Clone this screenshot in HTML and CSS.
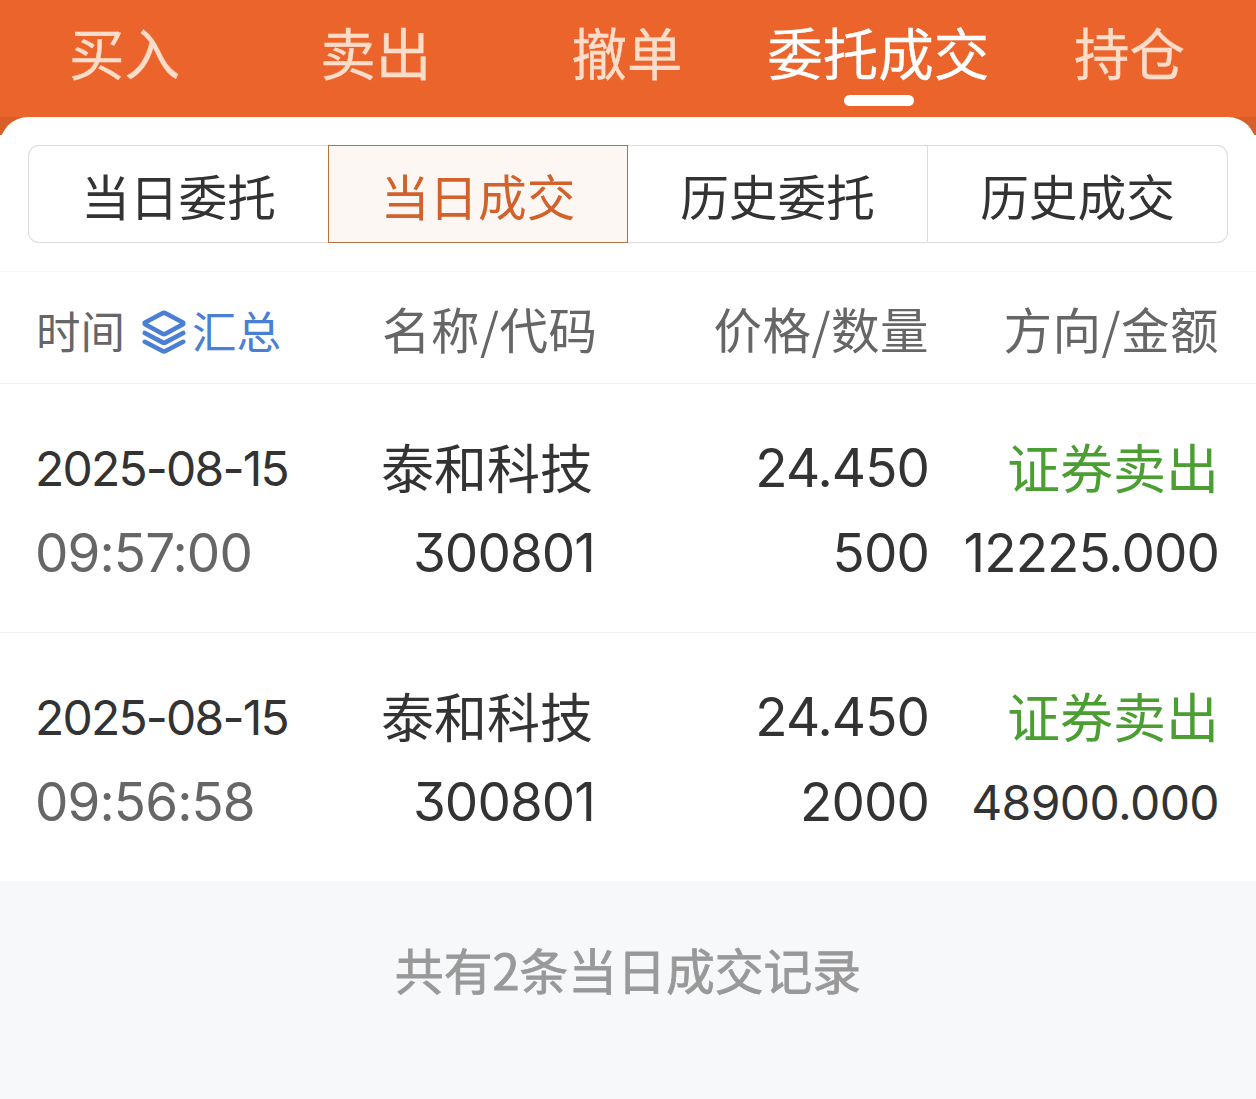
FILE: index.html
```html
<!DOCTYPE html>
<html lang="zh-CN">
<head>
    <meta charset="UTF-8">
    <meta name="viewport" content="width=device-width, initial-scale=1.0">
    <title>当日成交</title>
    <link rel="stylesheet" href="styles.css">
</head>
<body>

    <nav class="top-nav">
        <a class="nav-item">买入</a>
        <a class="nav-item">卖出</a>
        <a class="nav-item">撤单</a>
        <a class="nav-item active">委托成交</a>
        <a class="nav-item">持仓</a>
    </nav>

    <main class="panel-wrap">
        <div class="panel">
            <div class="tabs">
                <button class="tab">当日委托</button>
                <button class="tab active">当日成交</button>
                <button class="tab">历史委托</button>
                <button class="tab">历史成交</button>
            </div>

            <div class="row table-head">
                <div class="head-time">
                    <span>时间</span>
                    <svg class="layers" viewBox="0 0 44 44" fill="none" stroke="currentColor" stroke-width="4.6" stroke-linecap="round" stroke-linejoin="round">
                        <path d="M20.5 3.3 Q22 2.5 23.5 3.3 L40.5 12.3 Q42.2 13.4 40.5 14.5 L23.5 23.7 Q22 24.5 20.5 23.7 L3.5 14.5 Q1.8 13.4 3.5 12.3 Z"/>
                        <path d="M2.8 23 L20.5 32.4 Q22 33.2 23.5 32.4 L41.2 23"/>
                        <path d="M2.8 31.8 L20.5 41 Q22 41.7 23.5 41 L41.2 31.8"/>
                    </svg>
                    <span class="summary">汇总</span>
                </div>
                <div class="right">名称/代码</div>
                <div class="right">价格/数量</div>
                <div class="right">方向/金额</div>
            </div>

            <div class="row record">
                <div class="date">2025-08-15</div>
                <div class="name">泰和科技</div>
                <div class="num right">24.450</div>
                <div class="side">证券卖出</div>
                <div class="time">09:57:00</div>
                <div class="num right">300801</div>
                <div class="num right">500</div>
                <div class="num right">12225.000</div>
            </div>

            <div class="row record">
                <div class="date">2025-08-15</div>
                <div class="name">泰和科技</div>
                <div class="num right">24.450</div>
                <div class="side">证券卖出</div>
                <div class="time">09:56:58</div>
                <div class="num right">300801</div>
                <div class="num right">2000</div>
                <div class="num right small">48900.000</div>
            </div>
        </div>
    </main>

    <footer class="total">共有2条当日成交记录</footer>

</body>
</html>
```
FILE: styles.css
```css
* {
    box-sizing: border-box;
}
body {
    margin: 0;
    background-color: #f7f8fa;
    color: #333;
    font-family: "Noto Sans CJK SC", sans-serif;
}

/* top navigation */
.top-nav {
    display: grid;
    grid-template-columns: repeat(5, 1fr);
    height: 117px;
    background-color: #eb642b;
}
.nav-item {
    position: relative;
    padding-right: 2px;
    text-align: center;
    font-size: 55.5px;
    line-height: 102px;
    color: #fddcc9;
    -webkit-text-stroke: 0.3px;
}
.nav-item.active {
    color: #fff;
}
.nav-item.active::after {
    content: "";
    position: absolute;
    left: 50%;
    top: 95px;
    width: 70px;
    height: 11px;
    margin-left: -35px;
    border-radius: 6px;
    background-color: #fff;
}

/* the strip behind the rounded corners is a little darker */
.panel-wrap {
    background: linear-gradient(#d95f28 18px, #fff 18px);
}
.panel {
    padding-top: 28px;
    border-radius: 28px 28px 0 0;
    background-color: #fff;
}

.tabs {
    display: grid;
    grid-template-columns: repeat(4, 1fr);
    height: 98px;
    margin: 0 28px 28px;
}
.tab {
    padding: 2px 0 0;
    border: 1px solid #dcdcdc;
    border-left-width: 0;
    background-color: #fff;
    color: #333;
    font-family: inherit;
    font-size: 48.7px;
    line-height: 94px;
}
.tab:first-child {
    border-left-width: 1px;
    border-right-width: 0;
    border-radius: 11px 0 0 11px;
}
.tab:last-child {
    border-radius: 0 11px 11px 0;
}
.tab.active {
    border: 1px solid #b8703f;
    background-color: #fdf7f3;
    color: #d2612b;
}

/* records */
.row {
    display: grid;
    grid-template-columns: 346px 213px 334px 290px;
    padding: 0 36px;
    border-bottom: 1px solid #f0f0f0;
}
.table-head {
    height: 113px;
    border-top: 1px solid #f8f8f8;
    font-size: 48.5px;
    line-height: 112px;
    letter-spacing: 0.5px;
    color: #666;
}
.head-time {
    display: flex;
    align-items: center;
    font-size: 44.5px;
    line-height: 116px;
    letter-spacing: 0;
}
.layers {
    width: 44px;
    height: 44px;
    margin: 4px 6px 0 17px;
    color: #4a80d4;
}
.summary {
    color: #4a80d4;
}
.right {
    text-align: right;
    white-space: nowrap;
}
.record {
    height: 249px;
    padding-top: 42px;
    grid-template-rows: 85px 85px;
    line-height: 85px;
}
.record:last-child {
    height: 248px;
    border-bottom: none;
}
.date, .time, .num {
    font-family: Inter, sans-serif;
    font-feature-settings: "cv09";
    letter-spacing: -0.9px;
}
.date {
    margin-left: -1px;
    font-size: 48px;
    letter-spacing: -1.8px;
}
.time {
    margin-left: -1px;
    font-size: 53px;
    color: #666;
}
.num {
    font-size: 53px;
}
.num.small {
    font-size: 48px;
    letter-spacing: -0.6px;
}
.name, .side {
    font-size: 53px;
    line-height: 81px;
}
.name {
    margin-left: -1px;
}
.side {
    text-align: right;
    color: #4a9e32;
}

.total {
    padding-top: 46px;
    text-align: center;
    font-size: 48.8px;
    line-height: 84px;
    color: #999;
    -webkit-text-stroke: 0.8px;
}
```
